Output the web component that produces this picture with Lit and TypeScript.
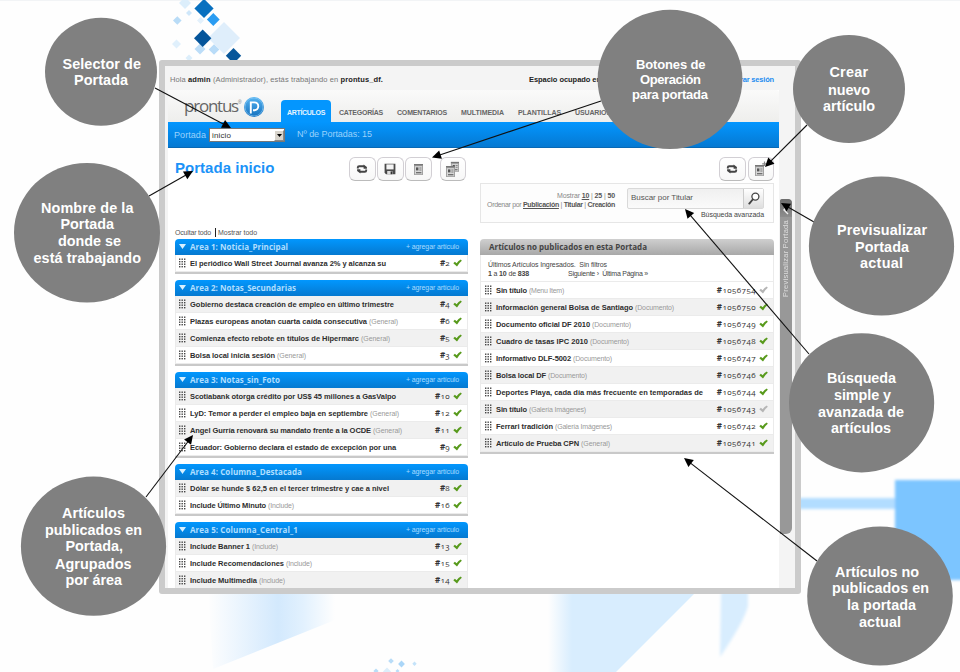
import { LitElement, html, svg, css } from "lit";
import { customElement, property } from "lit/decorators.js";

/* Text run that spaces its letters to fill a given width. */
@customElement("fit-text")
class FitText extends LitElement {
  @property({ type: Number }) w = 0;
  static styles = css`
    :host { display: inline-block; white-space: pre; }
  `;
  render() {
    return html`<slot></slot>`;
  }
  firstUpdated() {
    const natural = this.getBoundingClientRect().width;
    const chars = (this.textContent || "").trim().length;
    if (this.w && chars > 1) {
      this.style.letterSpacing = (this.w - natural) / chars + "px";
    }
  }
}

type Row = [string, number, string, number, string, boolean?];

const areas: { name: string; w: number; rows: Row[]; plain?: boolean }[] = [
  { name: "Area 1: Noticia_Principal", w: 98, plain: true, rows: [
    ["El periódico Wall Street Journal avanza 2% y alcanza su", 196, "", 0, "#2"],
  ] },
  { name: "Area 2: Notas_Secundarias", w: 106, rows: [
    ["Gobierno destaca creación de empleo en último trimestre", 204, "", 0, "#4"],
    ["Plazas europeas anotan cuarta caída consecutiva", 177, "(General)", 29, "#6"],
    ["Comienza efecto rebote en títulos de Hipermarc", 169, "(General)", 29, "#5"],
    ["Bolsa local inicia sesión", 85, "(General)", 29, "#3"],
  ] },
  { name: "Area 3: Notas_sin_Foto", w: 90, rows: [
    ["Scotiabank otorga crédito por US$ 45 millones a GasValpo", 206, "", 0, "#10"],
    ["LyD: Temor a perder el empleo baja en septiembre", 178, "(General)", 29, "#12"],
    ["Angel Gurría renovará su mandato frente a la OCDE", 181, "(General)", 29, "#11"],
    ["Ecuador: Gobierno declara el estado de excepción por una", 206, "", 0, "#9"],
  ] },
  { name: "Area 4: Columna_Destacada", w: 112, rows: [
    ["Dólar se hunde $ 62,5 en el tercer trimestre y cae a nivel", 199, "", 0, "#8"],
    ["Include Último Minuto", 76, "(Include)", 26, "#16"],
  ] },
  { name: "Area 5: Columna_Central_1", w: 108, rows: [
    ["Include Banner 1", 60, "(Include)", 26, "#13"],
    ["Include Recomendaciones", 94, "(Include)", 26, "#15"],
    ["Include Multimedia", 67, "(Include)", 26, "#14"],
  ] },
];

const unpublished: Row[] = [
  ["Sin título", 31, "(Menu Item)", 35, "#1056754", true],
  ["Información general Bolsa de Santiago", 137, "(Documento)", 39, "#1056750"],
  ["Documento oficial DF 2010", 94, "(Documento)", 39, "#1056749"],
  ["Cuadro de tasas IPC 2010", 92, "(Documento)", 39, "#1056748"],
  ["Informativo DLF-5002", 75, "(Documento)", 39, "#1056747"],
  ["Bolsa local DF", 50, "(Documento)", 39, "#1056746"],
  ["Deportes Playa, cada día más frecuente en temporadas de", 207, "", 0, "#1056744"],
  ["Sin título", 31, "(Galería Imágenes)", 57, "#1056743", true],
  ["Ferrari tradición", 57, "(Galería Imágenes)", 57, "#1056742"],
  ["Artículo de Prueba CPN", 83, "(General)", 29, "#1056741"],
];

/* Callouts: ellipse centre and radii, then lines as [text, left, right, baseline]. */
type Line = [string, number, number, number];
const callouts: { e: number[]; size: number; lines: Line[] }[] = [
  { e: [101, 71.8, 56, 54], size: 14.4, lines: [["Selector de", 62.5, 141, 68.7], ["Portada", 74, 128, 85]] },
  { e: [87, 232.7, 73, 69.8], size: 14.4, lines: [["Nombre de la", 41, 133.5, 212.6], ["Portada", 60.5, 114, 229.3], ["donde se", 58, 121, 246], ["está trabajando", 33.5, 141, 262.8]] },
  { e: [670, 79.4, 72.4, 69.6], size: 13, lines: [["Botones de", 636, 705.5, 69.3], ["Operación", 640, 701, 84], ["para portada", 632, 708, 98.6]] },
  { e: [849, 89, 56, 54], size: 14.4, lines: [["Crear", 829.5, 868, 77.3], ["nuevo", 828, 870, 94.5], ["artículo", 823, 875, 111]] },
  { e: [881.5, 246, 72.6, 69.6], size: 14.4, lines: [["Previsualizar", 837, 927, 235], ["Portada", 855, 909, 251.5], ["actual", 860, 903, 268]] },
  { e: [861.6, 402.8, 72.6, 69.6], size: 14.4, lines: [["Búsqueda", 827, 896, 383], ["simple y", 834, 891, 400], ["avanzada de", 818, 904, 417], ["artículos", 831, 891, 433]] },
  { e: [93.5, 546.2, 72.6, 69.6], size: 14.4, lines: [["Artículos", 62, 125, 518], ["publicados en", 45, 142, 534.6], ["Portada,", 65.5, 123, 551], ["Agrupados", 55, 131.5, 568.5], ["por área", 65.5, 122, 585]] },
  { e: [880, 596, 72.8, 69.6], size: 14.4, lines: [["Artículos no", 835, 919, 576.5], ["publicados en", 832, 929, 592.8], ["la portada", 847, 916, 609.5], ["actual", 859, 901, 626.8]] },
];

const arrows = [
  [155, 88, 231, 128],
  [149, 196, 193, 171],
  [601, 101, 432, 157.5],
  [807, 125, 765, 167],
  [814, 222, 781, 203],
  [809, 354, 685, 209],
  [146, 497, 193, 435],
  [817, 561, 684, 458],
];

const diamonds: [number, number, number, string][] = [
  [224, 38, 16, "#dfeefb"],
  [185, 3, 6, "#dceefb"],
  [189, 13, 3, "#cfe7fa"],
  [177.3, 20.5, 4.3, "#b9dcf7"],
  [200.5, 20.5, 3.5, "#e3f1fc"],
  [176.5, 44, 4.5, "#e0f0fc"],
  [200, 49, 5.5, "#bcddf8"],
  [214, 49.5, 5.3, "#b9dcf8"],
  [189, 58, 3.5, "#dceefb"],
  [204, 8.5, 9.6, "#0870bf"],
  [213.3, 19.5, 6.4, "#2a9cf2"],
  [202.7, 38.3, 8.7, "#05559b"],
  [233.5, 55.8, 7.7, "#07569a"],
  [391, 661, 2.8, "#b9ddf8"],
  [401.5, 664, 3.4, "#aad6f8"],
  [414.5, 663.7, 2.2, "#c4e3fa"],
  [376, 671, 2.6, "#b9ddf8"],
  [387, 671.5, 4, "#dceefb"],
  [397.5, 671, 2, "#b9ddf8"],
];

const page = svg`<g fill="none" stroke="none">
  <rect x="1" y="1" width="9" height="11" fill="#a2a2a2"/>
  <rect x="1" y="1" width="9" height="1.4" fill="#777"/>
  <rect x="2" y="3.2" width="7" height="8" fill="#d6d6d6"/>
  <rect x="3" y="4.4" width="2.4" height="3" fill="#555"/><path d="M6.3 5h2.2M6.3 7h2.2" stroke="#777" stroke-width=".9"/><path d="M3 9.7h5.4" stroke="#666" stroke-width="1.2"/></g>`;

const icons: Record<string, unknown> = {
  refresh: html`<svg width="12" height="12" viewBox="0 0 12 12"><path d="M1.8 5.4V4.6Q1.8 3.3 3.2 3.3H8" fill="none" stroke="#444" stroke-width="1.9"/><path d="M10.2 6.6v.8q0 1.3-1.4 1.3H4" fill="none" stroke="#444" stroke-width="1.9"/><path d="M7.6 1.4 10.9 4V5.7H7.6zM4.4 10.6 1.1 8V6.3h3.3z" fill="#444"/></svg>`,
  save: html`<svg width="12" height="12" viewBox="0 0 12 12"><path d="M.6.8h10.8v10.4H2L.6 9.8z" fill="#4a4a4a"/><rect x="2.4" y="1.4" width="7.2" height="5" fill="#f4f4f4"/><rect x="3.2" y="8" width="5.2" height="3.2" fill="#ddd"/><rect x="6.6" y="8.4" width="1.5" height="2.8" fill="#333"/></svg>`,
  page: html`<svg width="11" height="13" viewBox="0 0 11 13">${page}</svg>`,
  pages: html`<svg width="15" height="17" viewBox="0 0 15 17"><g transform="translate(5 0) scale(.9)">${page}</g><g transform="translate(0 4)">${page}</g></svg>`,
  add: html`<svg width="15" height="17" viewBox="0 0 15 17"><g transform="translate(1 3)">${page}</g><path d="M11.5 .5v4.6M9.2 2.8h5" stroke="#888" stroke-width="1.2"/></svg>`,
};

@customElement("app-root")
class AppRoot extends LitElement {
  static styles = css`
    :host { display: block; position: relative; width: 960px; height: 672px; overflow: hidden; background: #fefefe; font-family: "Liberation Sans", Arial, sans-serif; }
    * { box-sizing: border-box; }
    .layer { position: absolute; inset: 0; display: block; }
    .callouts { font-weight: bold; fill: #fff; }
    .frame { position: relative; margin: 0; display: flex; flex-direction: column; width: 642px; height: 534px; border: 6px solid #cbcbcb; border-radius: 3px; background: #f4f4f4; overflow: hidden; font-size: 8px; color: #333; white-space: nowrap; }
    .stage { padding: 60px 0 0 159px; }
    .hello { height: 24px; padding: 2px 21px 0 5px; display: flex; align-items: center; flex: none; color: #777; font-size: 7.5px; }
    .hello b { color: #222; }
    .hello .space { margin-left: auto; margin-right: 127px; }
    .hello .out { color: #1c8df0; font-weight: bold; }
    .body { display: flex; flex: 1; min-height: 0; }
    .content { width: 611px; margin-left: 3px; background: #fff; display: flex; flex-direction: column; overflow: hidden; }
    .head { height: 32px; flex: none; display: flex; background: linear-gradient(#fafafa, #eeeeec); border-radius: 3px 3px 0 0; }
    .brand { display: flex; width: 113px; padding: 6px 0 0 16px; align-items: flex-start; }
    .brand .name { font: 17px/20px "Open Sans", sans-serif; color: #666; }
    .brand sup { font-size: 5px; line-height: 5px; padding-top: 4px; width: 5px; color: #777; }
    .tabs { display: flex; align-items: flex-end; }
    .tab { height: 22px; line-height: 25px; font-weight: bold; font-size: 7px; color: #666; }
    .tab.on { background: #0496fe; color: #e4f4ff; border-radius: 4px 4px 0 0; width: 50px; padding-left: 6px; margin-right: 8px; }
    .tab.off { margin-right: 14px; }
    .bar { height: 26px; flex: none; display: flex; align-items: center; padding: 1px 6px 0; background: linear-gradient(#0396ff, #0579d2); border-bottom: 1px solid #0869b5; color: #9bd2fc; font-size: 9px; }
    .bar .count { padding-bottom: 2px; margin-left: 12px; }
    .select { margin-left: 3px; display: flex; justify-content: space-between; align-items: center; width: 76px; height: 14px; background: #fff; border: 1px solid #777; padding-left: 2px; color: #333; font-size: 8px; }
    .select i { width: 10px; height: 11px; background: #d8d4cc; border: 1px solid #888; border-left-color: #fff; border-top-color: #fff; display: flex; align-items: center; justify-content: center; }
    .select svg { display: block; }
    .cols { display: flex; padding: 0 5px 0 7px; gap: 12px; }
    .col { width: 293px; }
    .col.right { width: 294px; }
    .top { height: 35px; display: flex; align-items: flex-end; }
    h1 { margin: 0; font-size: 15px; line-height: 20px; color: #1b93f8; width: 174px; height: 25px; }
    .btn { width: 26.5px; height: 24px; margin-bottom: 2px; border: 1px solid #d2cfd4; border-bottom-color: #bbb; border-radius: 6px; background: linear-gradient(#fff, #f7f7f7); margin-right: 1.5px; display: flex; align-items: center; justify-content: center; }
    .btn.far { margin-left: 6.5px; }
    .right .top { justify-content: flex-end; }
    .right .btn { margin: 0 0 2px 2px; }
    .links { height: 56px; padding-top: 45px; font-size: 7px; line-height: 9px; color: #555; }
    .links i { display: inline-block; width: 1px; height: 9px; background: #222; margin: 0 2px 0 4px; vertical-align: bottom; }
    .search { height: 40px; border: 1px solid #e6e6e6; background: #fdfdfd; display: flex; font-size: 7px; line-height: 9px; color: #888; justify-content: flex-end; padding-right: 9px; }
    .search .opts { padding-top: 7px; text-align: right; margin-right: 12px; }
    .search b { color: #555; }
    .field { display: flex; margin-top: 4px; width: 137px; height: 21px; border: 1px solid #d9d9d9; border-radius: 2px; background: linear-gradient(#f0f0f0, #fafafa); align-items: center; font-size: 8px; color: #555; padding: 0 0 2px 3px; justify-content: space-between; }
    .field .go { width: 20px; height: 19px; margin-bottom: -2px; border-left: 1px solid #ccc; background: linear-gradient(#fff, #dedede); display: flex; align-items: center; justify-content: center; }
    .adv { text-align: right; color: #444; line-height: 12px; }
    .gap { height: 16px; }
    .area { margin-bottom: 6px; border-bottom: 2px solid #c9c9c9; }
    .area h2 { margin: 0; height: 16px; font: bold 8px/16px "Open Sans", sans-serif; border-radius: 4px 4px 0 0; padding: 0 9px 0 4px; display: flex; background: linear-gradient(#0297fe, #0579d0); color: #b0dfff; }
    .area h2 svg { margin: 5px 4px 0 0; }
    .area h2 .add { margin-left: auto; font: 7px/15px "Liberation Sans", sans-serif; color: #a8dbff; }
    .area.gray h2 { background: linear-gradient(#cfcfcf, #a8a8a8); color: #444; padding-left: 9px; }
    .row { height: 17px; display: flex; align-items: center; padding: 0 5px 0 3px; border: solid #ebebeb; border-width: 0 1px 1px; }
    .row.odd { background: #f1f1f1; }
    .row .t { font-weight: bold; font-size: 7.5px; color: #2d2d2d; margin-left: 4px; }
    .right .row { padding-left: 4px; }
    .row .k { color: #999; margin-left: 2px; font-size: 7px; }
    .row .id { margin-left: auto; font: 8px/16px "Open Sans", sans-serif; font-variant-numeric: oldstyle-nums; color: #333; margin-right: 3px; }
    .row .id b { font-weight: 700; }
    .row svg { display: block; flex: none; }
    .info { height: 27px; padding: 5px 0 0 7px; font-size: 7px; line-height: 9px; color: #444; border: solid #ebebeb; border-width: 0 1px 1px; }
    .info div { display: flex; }
    .info .next { margin-left: 39px; }
    .side { width: 12px; height: 335px; margin: 109px 0 0 1px; background: #989898; border-radius: 3px 5px 6px 0; display: flex; flex-direction: column; align-items: center; }
    .side .knob { width: 12px; height: 18px; background: linear-gradient(#6d6d6d, #8d8d8d); border-radius: 2px 4px 0 0; }
    .side .label { writing-mode: vertical-rl; transform: rotate(180deg); font-size: 7.5px; line-height: 12px; color: #dedede; margin-top: 1px; letter-spacing: 0.27px; height: 79px; }
  `;

  check(off?: boolean) {
    return html`<svg width="9" height="8" viewBox="0 0 9 8"><path d="M.3 4.3 1.9 2.8 3.6 4.2Q5.4 1.8 7.8 .5L8.8 1.8Q6 4 4 7.6z" fill=${off ? "#b5b5b5" : "#589a1c"}/></svg>`;
  }

  row(r: Row, odd: boolean) {
    const n = r[4].length;
    return html`<div class="row ${odd ? "odd" : ""}">
      <svg width="7" height="10" viewBox="0 0 7 10">${[0, 1, 2, 3].map((y) => [0, 1, 2].map((x) => svg`<rect x=${x * 2.5} y=${0.5 + y * 2.5} width="1.4" height="1.4" fill="#444"/>`))}</svg>
      <fit-text class="t" .w=${r[1]}>${r[0]}</fit-text>
      ${r[2] ? html`<fit-text class="k" .w=${r[3]}>${r[2]}</fit-text>` : ""}
      <fit-text class="id" .w=${n * 4.9 + (n < 4 ? 0.3 : 0)}><b>#</b>${r[4].slice(1)}</fit-text>${this.check(r[5])}
    </div>`;
  }

  arrow([x1, y1, x2, y2]: number[]) {
    const a = Math.atan2(y2 - y1, x2 - x1);
    return svg`<line x1=${x1} y1=${y1} x2=${x2 - 5 * Math.cos(a)} y2=${y2 - 5 * Math.sin(a)} stroke="#111" stroke-width="1.1"/>
      <path d="M0 0 -9 -4.4V4.4z" fill="#000" transform="translate(${x2} ${y2}) rotate(${(a * 180) / Math.PI})"/>`;
  }

  render() {
    return html`
      <svg class="layer" width="960" height="672">
        <defs>
          <linearGradient id="a"><stop offset="0" stop-color="#fefefe"/><stop offset=".55" stop-color="#d3e9fd"/><stop offset=".75" stop-color="#e2f1fe"/><stop offset="1" stop-color="#fefefe"/></linearGradient>
          <linearGradient id="b"><stop offset="0" stop-color="#fefefe"/><stop offset=".16" stop-color="#d8edfe"/></linearGradient>
          <filter id="soft"><feGaussianBlur stdDeviation="1.6"/></filter>
        </defs>
        <rect width="960" height="1" fill="#f2f4f6"/>
        <path d="M208 590H335V620L213 669z" fill="url(#a)"/>
        <path d="M548 590H698L616 672H548z" fill="url(#b)"/>
        <g filter="url(#soft)">
          <path d="M721 590H748V606Q744 622 720 657z" fill="#d8edfe"/>
          <rect x="790" y="498" width="110" height="11" fill="#b2ddff"/>
          <path d="M895 480H970V580H895z" fill="#7bc5ff"/>
        </g>
        ${diamonds.map(([x, y, r, c]) => svg`<path d="M${x} ${y - r}L${x + r} ${y}L${x} ${y + r}L${x - r} ${y}z" fill=${c}/>`)}
      </svg>
      <div class="stage"><div class="frame">
        <div class="hello">
          <fit-text .w=${213}>Hola <b>admin</b> (Administrador), estás trabajando en <b>prontus_df.</b></fit-text>
          <b class="space"><fit-text .w=${72}>Espacio ocupado en</fit-text></b>
          <fit-text class="out" .w=${46}>Cerrar sesión</fit-text>
        </div>
        <div class="body">
          <div class="content">
            <div class="head">
              <div class="brand">
                <fit-text class="name" .w=${54}>prontus</fit-text><sup>®</sup>
                <svg width="22" height="22" viewBox="0 0 22 22"><defs><linearGradient id="g" x2="0" y2="1"><stop offset="0" stop-color="#55b4f2"/><stop offset="1" stop-color="#1470bd"/></linearGradient></defs><circle cx="11" cy="11" r="10" fill="url(#g)"/><circle cx="11" cy="11" r="9" fill="none" stroke="#8fcbf5" stroke-width=".6"/><path d="M7.8 17.5V6.4H11.4A3.9 3.9 0 0 1 11.4 14.2H10" fill="none" stroke="#fff" stroke-width="1.9"/></svg>
              </div>
              <div class="tabs">
                <div class="tab on"><fit-text .w=${38}>ARTÍCULOS</fit-text></div>
                ${([["CATEGORÍAS", 44], ["COMENTARIOS", 50], ["MULTIMEDIA", 43], ["PLANTILLAS", 43], ["USUARIOS", 36]] as [string, number][]).map(([t, w]) => html`<div class="tab off"><fit-text .w=${w}>${t}</fit-text></div>`)}
              </div>
            </div>
            <div class="bar">
              <fit-text .w=${32}>Portada</fit-text>
              <div class="select"><fit-text .w=${19}>inicio</fit-text><i><svg width="5" height="3"><path d="M0 0h5L2.5 3z" fill="#000"/></svg></i></div>
              <fit-text class="count" .w=${75}>Nº de Portadas: 15</fit-text>
            </div>
            <div class="cols">
              <div class="col">
                <div class="top">
                  <h1><fit-text .w=${99.5}>Portada inicio</fit-text></h1>
                  <div class="btn">${icons.refresh}</div><div class="btn">${icons.save}</div><div class="btn">${icons.page}</div><div class="btn far">${icons.pages}</div>
                </div>
                <div class="links"><fit-text .w=${36}>Ocultar todo</fit-text><i></i><fit-text .w=${39}>Mostrar todo</fit-text></div>
                ${areas.map((a) => html`<div class="area">
                  <h2><svg width="7" height="5"><path d="M0 0h7L3.5 5z" fill="#d8f0ff"/></svg><fit-text .w=${a.w}>${a.name}</fit-text><fit-text class="add" .w=${53}>+ agregar artículo</fit-text></h2>
                  ${a.rows.map((r, i) => this.row(r, !a.plain && i % 2 === 0))}
                </div>`)}
              </div>
              <div class="col right">
                <div class="top"><div class="btn">${icons.refresh}</div><div class="btn">${icons.add}</div></div>
                <div class="search">
                  <div class="opts">
                    <fit-text .w=${58}>Mostrar <b><u>10</u></b> | <b>25</b> | <b>50</b></fit-text><br>
                    <fit-text .w=${128}>Ordenar por <b><u>Publicación</u></b> | <b>Titular</b> | <b>Creación</b></fit-text>
                  </div>
                  <div>
                    <div class="field"><fit-text .w=${62}>Buscar por Titular</fit-text><span class="go"><svg width="12" height="13" viewBox="0 0 12 13"><circle cx="7.4" cy="4.6" r="3.5" fill="#fff" stroke="#444" stroke-width="1.3"/><path d="M4.7 7.5 1.3 11.6" stroke="#444" stroke-width="1.9" stroke-linecap="round"/></svg></span></div>
                    <div class="adv"><fit-text .w=${63}>Búsqueda avanzada</fit-text></div>
                  </div>
                </div>
                <div class="gap"></div>
                <div class="area gray">
                  <h2><fit-text .w=${158}>Artículos no publicados en esta Portada</fit-text></h2>
                  <div class="info">
                    <div><fit-text .w=${119}>Últimos Artículos Ingresados.  Sin filtros</fit-text></div>
                    <div><fit-text .w=${41}><b>1</b> a <b>10</b> de <b>838</b></fit-text><fit-text class="next" .w=${80}>Siguiente ›  Última Página »</fit-text></div>
                  </div>
                  ${unpublished.map((r, i) => this.row(r, i % 2 === 1))}
                </div>
              </div>
            </div>
          </div>
          <div class="side"><div class="knob"><svg width="12" height="18"><path d="M8 6 4 11l4 4" fill="none" stroke="#eee" stroke-width="1.4"/></svg></div><div class="label">Previsualizar Portada</div></div>
        </div>
      </div></div>
      <svg class="layer callouts" width="960" height="672">
        ${arrows.map((a) => this.arrow(a))}
        ${callouts.map((c) => svg`<ellipse cx=${c.e[0]} cy=${c.e[1]} rx=${c.e[2]} ry=${c.e[3]} fill="#808080"/>
          ${c.lines.map(([t, l, r, y]) => svg`<text x=${l} y=${y} font-size=${c.size} textLength=${r - l}>${t}</text>`)}`)}
      </svg>
    `;
  }
}
